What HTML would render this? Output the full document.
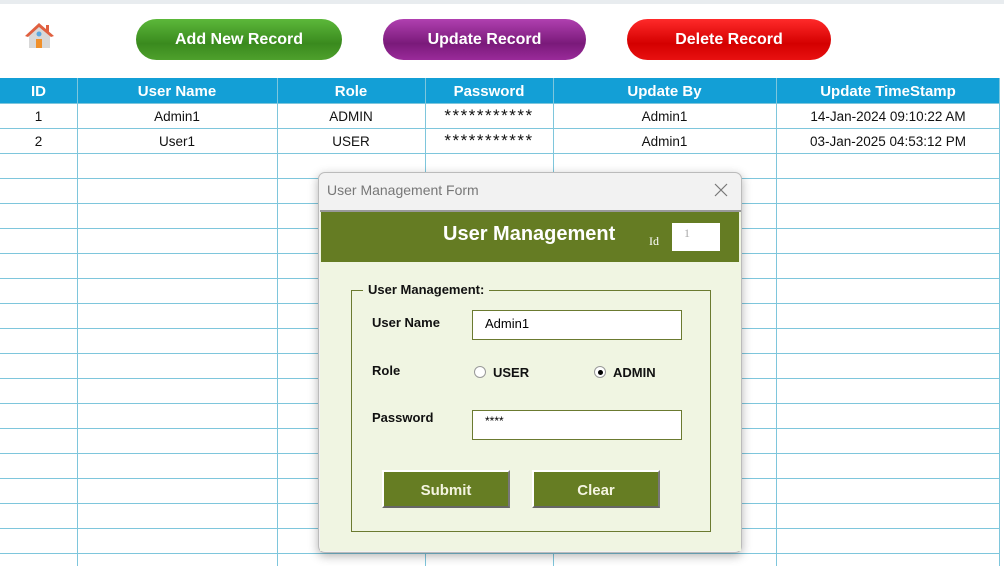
<!DOCTYPE html>
<html><head><meta charset="utf-8"><style>
*{margin:0;padding:0;box-sizing:border-box}
body{width:1004px;height:566px;overflow:hidden;background:#fff;font-family:"Liberation Sans",sans-serif;position:relative}
.abs{position:absolute}
.btn{position:absolute;top:19px;height:41px;border-radius:21px;color:#fff;font-weight:bold;font-size:16px;text-align:center;line-height:41px}
.hl{position:absolute;left:0;width:1000px;height:1px;background:#7ec6dc}
.vl{position:absolute;top:78px;width:1px;height:488px;background:#7ec6dc}
.hd{position:absolute;top:79px;height:25px;line-height:25px;color:#fff;font-weight:bold;font-size:15px;text-align:center}
.c{position:absolute;height:25px;line-height:25px;font-size:13.5px;text-align:center;color:#111}
.st{position:absolute;height:25px;line-height:28px;font-size:17px;letter-spacing:1.5px;text-align:center;color:#111}
.lbl{position:absolute;font-size:13px;font-weight:bold;color:#111}
.fb{position:absolute;width:128px;height:38px;background:#667d23;color:#f4f4e0;font-weight:bold;font-size:15px;text-align:center;line-height:38px;border-top:2px solid #fff;border-left:2px solid #fff;border-right:2px solid #777;border-bottom:2px solid #666}
</style></head><body>
<div class="abs" style="left:0;top:0;width:1004px;height:4px;background:#e8ecef"></div>
<svg class="abs" style="left:24px;top:22px" width="31" height="27" viewBox="0 0 31 27">
<polygon points="15,2 2,14 5,14 5,26 26,26 26,14 29,14" fill="#d8d8d8"/>
<polygon points="15,1 1,14 4,15 15,5 27,15 30,14" fill="#e06040"/>
<rect x="22" y="3" width="3" height="7" fill="#e06040"/>
<rect x="12" y="17" width="6" height="9" fill="#f0902a"/>
<circle cx="15" cy="12" r="2.5" fill="#5aa8e0"/>
</svg>
<div class="btn" style="left:136px;width:206px;background:linear-gradient(#5cb83a,#3a8a1e 60%,#4ea02c)">Add New Record</div>
<div class="btn" style="left:383px;width:203px;background:linear-gradient(#b040b0,#7a1a7a 60%,#9a2a9a)">Update Record</div>
<div class="btn" style="left:627px;width:204px;background:linear-gradient(#ff2a2a,#d40000 60%,#e81010)">Delete Record</div>

<div class="abs" style="left:0;top:78px;width:1000px;height:25px;background:#139fd6"></div>
<div class="hd" style="left:0;width:77px">ID</div>
<div class="hd" style="left:77px;width:200px">User Name</div>
<div class="hd" style="left:277px;width:148px">Role</div>
<div class="hd" style="left:425px;width:128px">Password</div>
<div class="hd" style="left:553px;width:223px">Update By</div>
<div class="hd" style="left:776px;width:224px">Update TimeStamp</div>

<div class="hl" style="top:103px"></div><div class="hl" style="top:128px"></div><div class="hl" style="top:153px"></div><div class="hl" style="top:178px"></div><div class="hl" style="top:203px"></div><div class="hl" style="top:228px"></div><div class="hl" style="top:253px"></div><div class="hl" style="top:278px"></div><div class="hl" style="top:303px"></div><div class="hl" style="top:328px"></div><div class="hl" style="top:353px"></div><div class="hl" style="top:378px"></div><div class="hl" style="top:403px"></div><div class="hl" style="top:428px"></div><div class="hl" style="top:453px"></div><div class="hl" style="top:478px"></div><div class="hl" style="top:503px"></div><div class="hl" style="top:528px"></div><div class="hl" style="top:553px"></div>
<div class="vl" style="left:77px"></div><div class="vl" style="left:277px"></div><div class="vl" style="left:425px"></div><div class="vl" style="left:553px"></div><div class="vl" style="left:776px"></div><div class="vl" style="left:999px"></div>

<div class="c" style="top:104px;left:0;width:77px">1</div>
<div class="c" style="top:104px;left:77px;width:200px">Admin1</div>
<div class="c" style="top:104px;left:277px;width:148px">ADMIN</div>
<div class="st" style="top:102px;left:425px;width:128px">***********</div>
<div class="c" style="top:104px;left:553px;width:223px">Admin1</div>
<div class="c" style="top:104px;left:776px;width:224px">14-Jan-2024 09:10:22 AM</div>
<div class="c" style="top:129px;left:0;width:77px">2</div>
<div class="c" style="top:129px;left:77px;width:200px">User1</div>
<div class="c" style="top:129px;left:277px;width:148px">USER</div>
<div class="st" style="top:127px;left:425px;width:128px">***********</div>
<div class="c" style="top:129px;left:553px;width:223px">Admin1</div>
<div class="c" style="top:129px;left:776px;width:224px">03-Jan-2025 04:53:12 PM</div>

<div class="abs" style="left:318px;top:172px;width:424px;height:381px;background:#f2f2f2;border:1px solid #bbb;border-radius:7px;box-shadow:0 3px 10px rgba(0,0,0,.3)"></div>
<div class="abs" style="left:327px;top:182px;font-size:14px;color:#777">User Management Form</div>
<svg class="abs" style="left:714px;top:183px" width="14" height="14" viewBox="0 0 14 14"><path d="M1 1L13 13M13 1L1 13" stroke="#777" stroke-width="1.2"/></svg>
<div class="abs" style="left:320px;top:210px;width:421px;height:341px;background:#f0f5e2;border-top:2px solid #999"></div>
<div class="abs" style="left:321px;top:212px;width:418px;height:50px;background:#657c23"></div>
<div class="abs" style="left:443px;top:223px;font-size:20px;font-weight:bold;color:#fff">User Management</div>
<div class="abs" style="left:649px;top:234px;font-size:12px;color:#fff;font-family:'Liberation Serif',serif">Id</div>
<div class="abs" style="left:672px;top:223px;width:48px;height:28px;background:#fff;color:#aaa;font-size:12px;padding:3px 0 0 12px;font-family:'Liberation Serif',serif">1</div>
<div class="abs" style="left:351px;top:290px;width:360px;height:242px;border:1px solid #6b7a30"></div>
<div class="abs" style="left:363px;top:282px;background:#f0f5e2;padding:0 5px;font-size:13px;font-weight:bold;color:#111">User Management:</div>
<div class="lbl" style="left:372px;top:315px">User Name</div>
<div class="abs" style="left:472px;top:310px;width:210px;height:30px;background:#fff;border:1px solid #6b7a30;font-size:13px;padding:5px 0 0 12px">Admin1</div>
<div class="lbl" style="left:372px;top:363px">Role</div>
<div class="abs" style="left:474px;top:366px;width:12px;height:12px;border-radius:50%;background:#fff;border:1px solid #999"></div>
<div class="lbl" style="left:493px;top:365px">USER</div>
<div class="abs" style="left:594px;top:366px;width:12px;height:12px;border-radius:50%;background:#fff;border:1px solid #999"></div>
<div class="abs" style="left:598px;top:370px;width:5px;height:5px;border-radius:50%;background:#000"></div>
<div class="lbl" style="left:613px;top:365px">ADMIN</div>
<div class="lbl" style="left:372px;top:410px">Password</div>
<div class="abs" style="left:472px;top:410px;width:210px;height:30px;background:#fff;border:1px solid #6b7a30;font-size:12px;padding:3px 0 0 12px">****</div>
<div class="fb" style="left:382px;top:470px">Submit</div>
<div class="fb" style="left:532px;top:470px">Clear</div>
</body></html>
